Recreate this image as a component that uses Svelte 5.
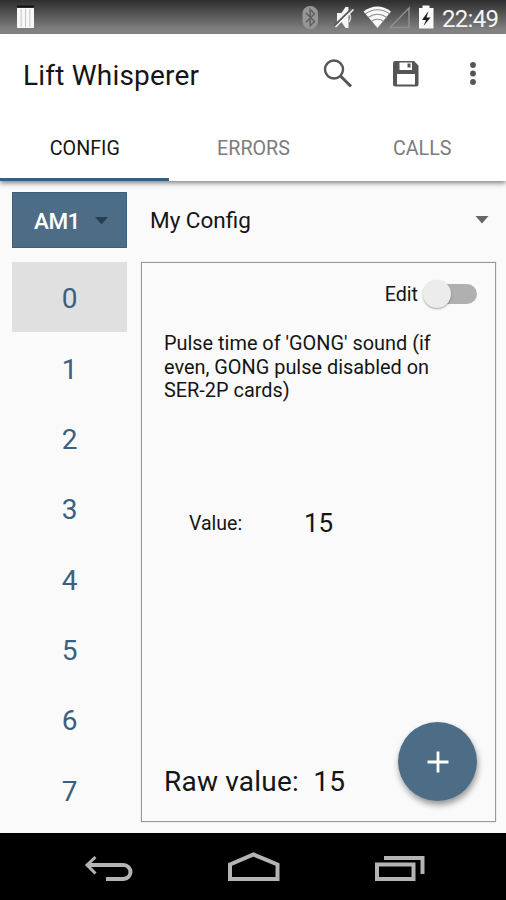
<script>
	let tabs = ['Config', 'Errors', 'Calls'];
	let activeTab = 'Config';
	let rows = [0, 1, 2, 3, 4, 5, 6, 7];
	let selected = 0;
	let edit = false;
	let value = 15;
</script>

<style>
	:global(body) {
		margin: 0;
		background: #000;
	}

	* {
		box-sizing: border-box;
	}

	button {
		padding: 0;
		border: none;
		background: none;
		font: inherit;
		color: inherit;
		cursor: pointer;
	}

	svg {
		display: block;
	}

	.screen {
		width: 506px;
		height: 900px;
		display: flex;
		flex-direction: column;
		overflow: hidden;
		font-family: Roboto, sans-serif;
		color: #151515;
		background: #fafafa;
	}

	.status {
		height: 34px;
		flex: none;
		display: flex;
		background: linear-gradient(#2e2e2e, #8c8c8c);
	}

	.status .icons {
		width: 442px;
		flex: none;
	}

	.status .time {
		font-size: 24px;
		line-height: 38px;
		letter-spacing: -0.7px;
		color: #f4f4f4;
		white-space: nowrap;
	}

	.header {
		height: 147px;
		flex: none;
		background: #fff;
		position: relative;
		box-shadow: 0 2px 5px rgba(0, 0, 0, 0.5);
	}

	.toolbar {
		height: 79px;
		display: flex;
		align-items: center;
		padding: 4px 16px 0 23px;
	}

	.toolbar h1 {
		flex: 1;
		margin: 0;
		font-size: 28px;
		font-weight: 400;
		line-height: 40px;
		letter-spacing: 0.2px;
	}

	.toolbar .actions {
		display: flex;
		align-items: center;
		color: #555;
	}

	.tabs {
		height: 68px;
		display: flex;
	}

	.tabs button {
		flex: 1;
		padding: 5px 0 0 1px;
		border-bottom: 3px solid transparent;
		font-size: 19.7px;
		text-transform: uppercase;
		color: #7c7c7c;
	}

	.tabs button.active {
		color: #151515;
		border-color: #39617f;
	}

	.content {
		flex: 1;
		padding: 11px 10px 0 12px;
	}

	.selectors {
		height: 56px;
		display: flex;
		align-items: center;
		font-size: 22.5px;
	}

	.selectors .group {
		width: 115px;
		height: 56px;
		display: flex;
		align-items: center;
		justify-content: space-between;
		padding: 1px 18px 0 21px;
		background: #4d6d87;
		border: 1px solid #386080;
		color: #fff;
		font-weight: 500;
		letter-spacing: -0.5px;
	}

	.selectors .config {
		flex: 1;
		height: 56px;
		display: flex;
		align-items: center;
		justify-content: space-between;
		padding: 0 7px 0 23px;
	}

	.main {
		display: flex;
		gap: 14px;
		padding-top: 14px;
	}

	.list {
		width: 115px;
		height: 571px;
		overflow: hidden;
	}

	.list button {
		display: block;
		width: 100%;
		height: 70.3px;
		padding-top: 3.6px;
		font-size: 28px;
		color: #39617f;
	}

	.list button.selected {
		background: #e0e0e0;
	}

	.panel {
		flex: 1;
		height: 560px;
		display: flex;
		flex-direction: column;
		padding: 13px 18px 0 22px;
		border: 1.4px solid #999;
		box-shadow: 0 0 1px #aaa;
	}

	.edit {
		height: 36px;
		display: flex;
		justify-content: flex-end;
		align-items: center;
		gap: 5px;
		font-size: 19.7px;
	}

	.switch {
		width: 54px;
		height: 30px;
		display: grid;
		align-items: center;
	}

	.switch::before,
	.switch::after {
		content: '';
		grid-area: 1 / 1;
	}

	.switch::before {
		height: 20px;
		margin-left: 4px;
		border-radius: 10px;
		background: #b0b0b0;
	}

	.switch::after {
		width: 28px;
		height: 28px;
		border-radius: 50%;
		background: #ececec;
		box-shadow: 0 1px 2px rgba(0, 0, 0, 0.35);
	}

	.switch.on::after {
		justify-self: end;
	}

	.description {
		height: 72px;
		margin: 20px 0 0;
		font-size: 19.9px;
		line-height: 23.5px;
		white-space: nowrap;
	}

	.value {
		display: flex;
		align-items: center;
		margin-top: 99px;
		padding-left: 25px;
		height: 40px;
		font-size: 19.5px;
	}

	.value span {
		width: 115px;
	}

	.value b {
		font-size: 26px;
		font-weight: 400;
	}

	.footer {
		flex: 1;
		display: flex;
		justify-content: space-between;
		align-items: flex-end;
		font-size: 28px;
	}

	.footer p {
		margin: 0 0 18px;
		line-height: 42px;
		letter-spacing: 0.2px;
		white-space: pre;
	}

	.fab {
		width: 79px;
		height: 79px;
		display: grid;
		place-items: center;
		margin-bottom: 20px;
		border-radius: 50%;
		background: #4d6d87;
		box-shadow: 1px 4px 6px rgba(0, 0, 0, 0.4);
	}

	.navbar {
		height: 67px;
		flex: none;
		background: #000;
	}
</style>

<div class="screen">
	<div class="status">
		<svg class="icons" width="442" height="34" viewBox="0 0 442 34">
			<rect x="17" y="8" width="17" height="20" fill="#f8f8f8" />
			<path d="M17 6.500h17" stroke="#111" stroke-width="2" />
			<path d="M21.200 9v18M25.500 9v18M29.800 9v18" stroke="#bbb" stroke-width="0.800" />
			<!-- bluetooth -->
			<rect x="302.500" y="6" width="15.500" height="23" rx="7.500" fill="#969696" />
			<path d="M306 13l8.500 8.500-4.300 4.300V9.500l4.300 4.200-8.500 8.500" fill="none" stroke="#606060" stroke-width="1.500" />
			<!-- muted -->
			<path d="M337 13h4.500l4-6h3v21h-3l-4-6H337z" fill="#f5f5f5" />
			<path d="M349 13q3 4.500 0 9" fill="none" stroke="#ddd" stroke-width="1.500" />
			<path d="M334.500 25.500L352 8.500" stroke="#5c5c5c" stroke-width="1.800" />
			<path d="M335.500 27L353.500 9.500" stroke="#f5f5f5" stroke-width="1.600" />
			<!-- wifi -->
			<path d="M363.500 11.500Q377.500 1.500 391 11.500L377.500 28z" fill="#fafafa" />
			<path d="M365 14Q377.500 5.500 390 14M368 17.500Q377.500 11 387 17.500M371 21.500Q377.500 17 384 21.500" fill="none" stroke="#8a8a8a" stroke-width="1.200" />
			<path d="M390 27.500L409 8v19.500z" fill="none" stroke="#8f8f8f" stroke-width="1.500" />
			<!-- battery -->
			<path d="M419 8h3.500V5.500h7V8h4v20.500H419z" fill="#fafafa" />
			<path d="M428.500 11l-6.500 9h4l-2.500 6 7-8.500h-4z" fill="#181818" />
		</svg>
		<span class="time">22:49</span>
	</div>

	<div class="header">
		<div class="toolbar">
			<h1>Lift Whisperer</h1>
			<div class="actions">
				<button aria-label="Search">
					<svg width="68" height="40" viewBox="0 0 68 40">
						<circle cx="13" cy="13.500" r="9" fill="none" stroke="currentColor" stroke-width="2.400" />
						<path d="M19.500 20L30 30.500" stroke="currentColor" stroke-width="3" />
					</svg>
				</button>
				<button aria-label="Save">
					<svg width="81" height="40" viewBox="0 0 81 40">
						<path d="M6 5h19l4.500 4.500v18.500a2.500 2.500 0 0 1-2.500 2.500H6.500A2.500 2.500 0 0 1 4 28V7.500a2.500 2.500 0 0 1 2-2.500z" fill="currentColor" />
						<path d="M10.500 6.500h12.500v7.500h-12.500zM8 18h18v10.500H8z" fill="#fff" />
						<path d="M18.500 7.500h3v4h-3z" fill="currentColor" />
					</svg>
				</button>
				<button aria-label="More options">
					<svg width="20" height="40" viewBox="0 0 20 40">
						<g fill="currentColor">
							<circle cx="3" cy="9" r="2.900" />
							<circle cx="3" cy="17.500" r="2.900" />
							<circle cx="3" cy="26" r="2.900" />
						</g>
					</svg>
				</button>
			</div>
		</div>
		<div class="tabs">
			{#each tabs as tab}
				<button class:active={activeTab === tab} on:click={() => activeTab = tab}>{tab}</button>
			{/each}
		</div>
	</div>

	<div class="content">
		<div class="selectors">
			<button class="group">
				AM1
				<svg width="13" height="8" viewBox="0 0 13 8"><path d="M0 0h13L6.500 7.500z" fill="#283f50" /></svg>
			</button>
			<button class="config">
				My Config
				<svg width="14" height="8" viewBox="0 0 14 8"><path d="M0.500 0h13L7 7.500z" fill="#666" /></svg>
			</button>
		</div>

		<div class="main">
			<div class="list">
				{#each rows as row}
					<button class:selected={selected === row} on:click={() => selected = row}>{row}</button>
				{/each}
			</div>

			<div class="panel">
				<div class="edit">
					Edit
					<button class="switch" class:on={edit} aria-label="Edit" on:click={() => edit = !edit}></button>
				</div>
				<p class="description">Pulse time of 'GONG' sound (if<br>even, GONG pulse disabled on<br>SER-2P cards)</p>
				<div class="value">
					<span>Value:</span>
					<b>{value}</b>
				</div>
				<div class="footer">
					<p>Raw value:  {value}</p>
					<button class="fab" aria-label="Add">
						<svg width="22" height="22" viewBox="0 0 22 22"><path d="M11 0.500v21M0.500 11h21" stroke="#fff" stroke-width="2.800" /></svg>
					</button>
				</div>
			</div>
		</div>
	</div>

	<div class="navbar">
		<svg width="506" height="67" viewBox="0 0 506 67" fill="none" stroke="#b4b4b4" stroke-width="4">
			<path d="M87 32h36.500a6.800 6.800 0 0 1 0 14h-17.500" />
			<path d="M95.500 24l-8.500 8 8.500 8.500" stroke-width="3" />
			<path d="M230 46V31.500l23.500-10 24 10V46z" />
			<path d="M377 31.500h36.500V46H377z" />
			<path d="M384 25h38.500v16" />
		</svg>
	</div>
</div>
